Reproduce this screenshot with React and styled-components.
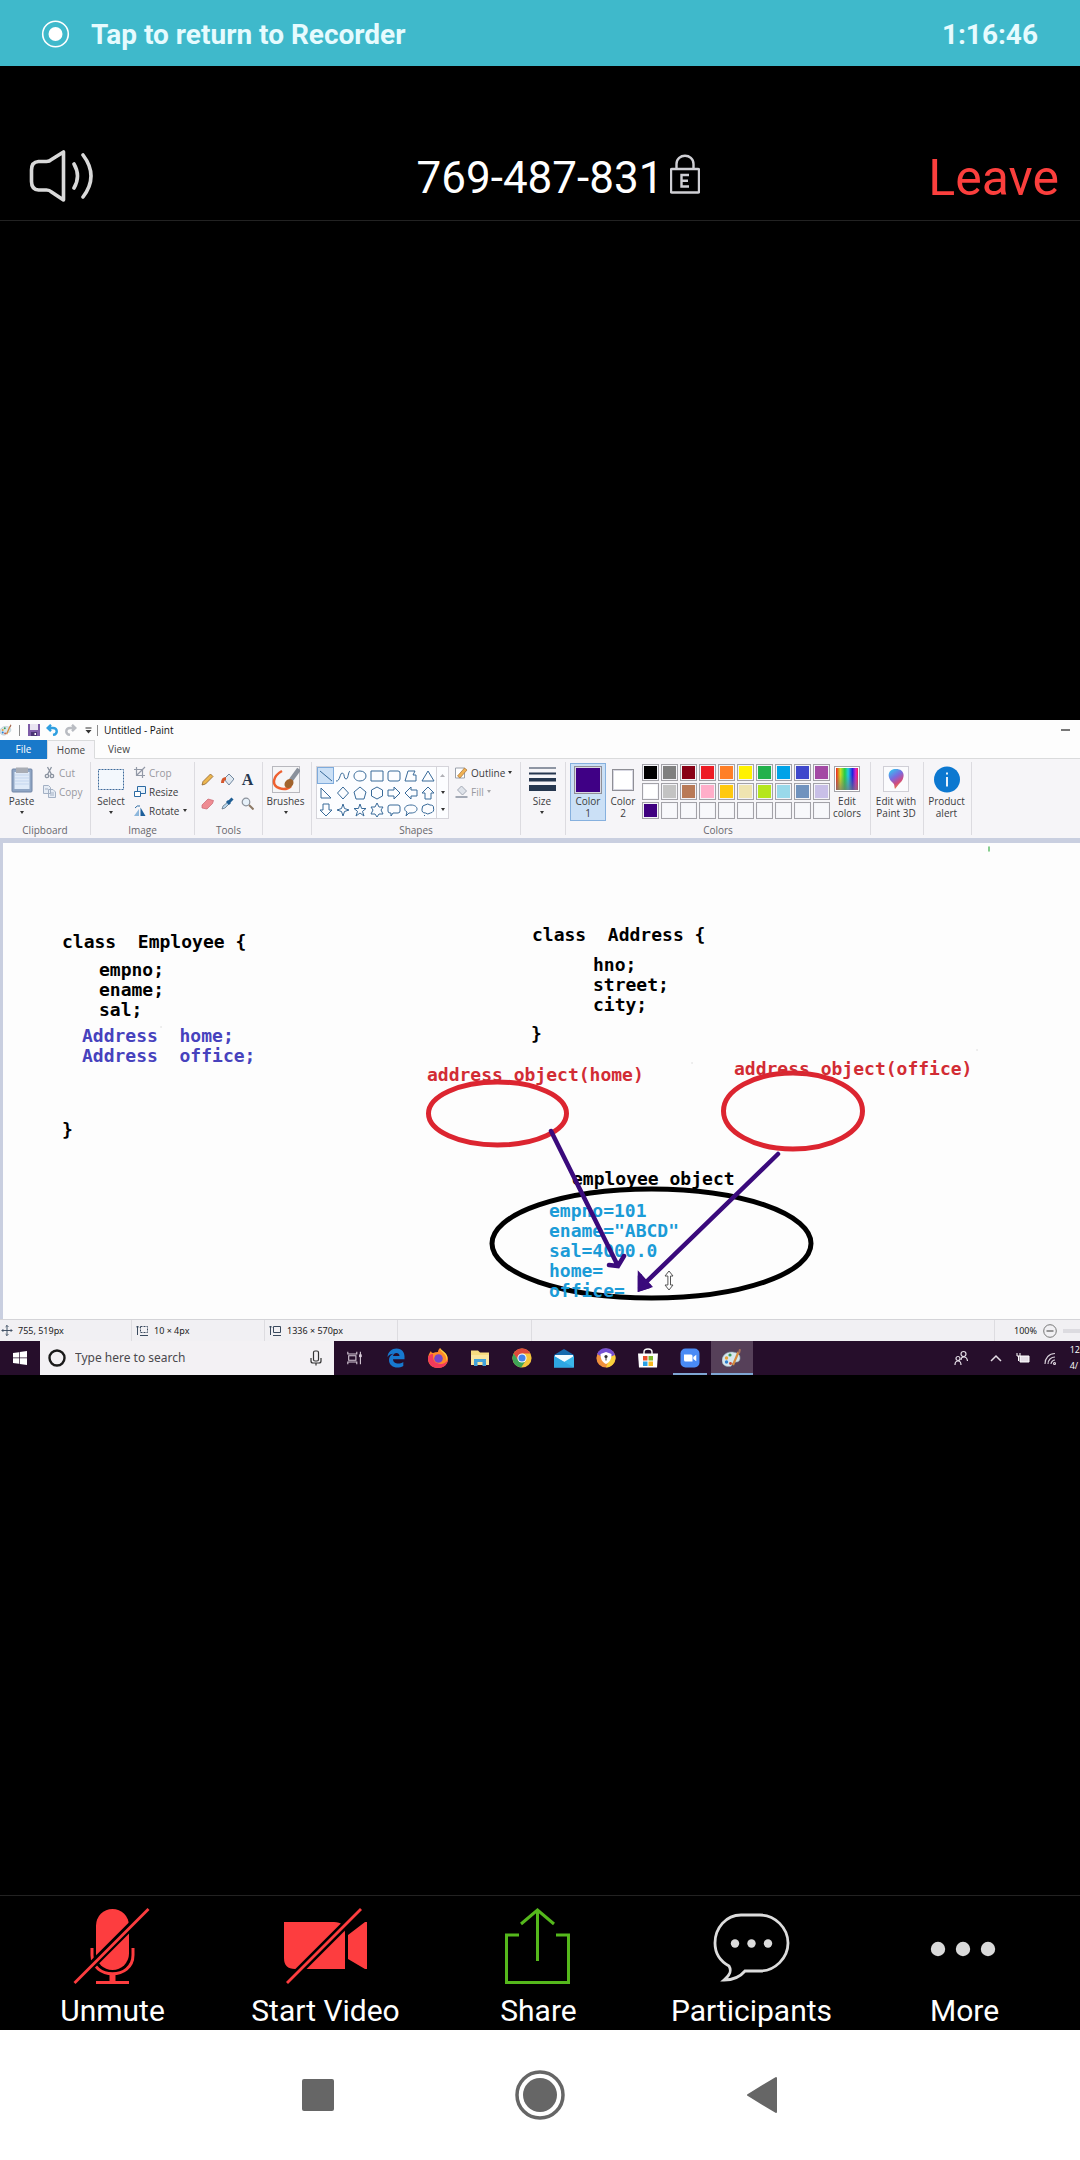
import React from "react";
import styled, { createGlobalStyle, css } from "styled-components";

const Global = createGlobalStyle`
  * { box-sizing: border-box; }
  body { margin: 0; background: #000; font-family: Roboto, sans-serif; }
  button { margin: 0; padding: 0; border: 0; background: none; font: inherit; color: inherit; }
  svg { display: block; flex: none; }
`;

/* ---------- phone frame ---------- */
const Screen = styled.div`
  min-height: 100vh;
  display: flex;
  flex-direction: column;
  background: #000;
  color: #fff;
`;
const RecorderBar = styled.button`
  && {
    height: 66px;
    padding: 4px 42px 0 40px;
    display: flex;
    align-items: center;
    gap: 20px;
    background: #3fb9cb;
    color: #e6fbfe;
    font-size: 28px;
    font-weight: 700;
    line-height: 32px;
  }
`;
const RecorderTime = styled.span`
  margin-left: auto;
`;
const MeetingHeader = styled.header`
  height: 155px;
  padding: 68px 21px 0;
  display: grid;
  grid-template-columns: 1fr auto 1fr;
  align-items: start;
  border-bottom: 1px solid #222;
`;
const HeaderIconButton = styled.button`
  justify-self: start;
  && { padding: 14px 0 0 6px; }
`;
const MeetingId = styled.h1`
  margin: 0;
  padding-top: 14px;
  font-size: 44px;
  font-weight: 400;
  line-height: 60px;
`;
const HeaderEnd = styled.div`
  display: flex;
  justify-content: space-between;
  align-items: flex-start;
`;
const LockHolder = styled.span`
  padding: 20px 0 0 7px;
`;
const LeaveButton = styled.button`
  && {
    padding-top: 14px;
    color: #fb3f3d;
    font-size: 50px;
    line-height: 60px;
  }
`;
const Stage = styled.main`
  flex: 1;
  display: flex;
  flex-direction: column;
  justify-content: center;
  padding-bottom: 21px;
`;
const Toolbar = styled.nav`
  display: grid;
  grid-template-columns: repeat(5, 1fr);
  padding: 11px 9px 1px 6px;
  border-top: 1px solid #222;
`;
const ToolButton = styled.button`
  display: flex;
  flex-direction: column;
  align-items: center;
  gap: 6px;
  && {
    font-size: 30px;
    line-height: 36px;
  }
`;
const SystemNav = styled.nav`
  height: 130px;
  display: grid;
  grid-template-columns: repeat(3, 222px);
  justify-content: center;
  background: #fff;
  button { display: grid; place-items: center; }
`;

/* ---------- shared desktop ---------- */
const Desktop = styled.section`
  overflow: hidden;
  background: #fdfdfd;
  color: #3c3c40;
  font: 10px/12px "Open Sans", sans-serif;
`;
const TitleBar = styled.div`
  height: 20px;
  display: flex;
  align-items: center;
  padding-right: 10px;
  color: #111;
`;
const TitleRule = styled.i`
  width: 1px;
  height: 11px;
  background: #8c8c8c;
  margin: 0 ${(p) => p.$right || 0}px 0 ${(p) => p.$left || 0}px;
`;
const QuickButton = styled.button`
  width: 18px;
  display: grid;
  place-items: center;
`;
const MinimizeButton = styled.button`
  && {
    margin-left: auto;
    width: 9px;
    height: 2px;
    background: #777;
  }
`;
const Tabs = styled.div`
  height: 19px;
  display: flex;
`;
const Tab = styled.button`
  && {
    width: 48px;
    color: #444;
    border-bottom: 1px solid #dadbdc;
    ${(p) => p.$kind === "file" && css`background: #1979ca; color: #fff; border-color: #1979ca; width: 47px;`}
    ${(p) => p.$kind === "active" && css`background: #f6f5f8; border: 1px solid #dadbdc; border-bottom-color: #f6f5f8;`}
  }
`;
const TabFill = styled.span`
  flex: 1;
  border-bottom: 1px solid #dadbdc;
`;
const Ribbon = styled.div`
  height: 79px;
  padding: 3px 0;
  display: flex;
  background: #f6f5f8;
`;
const Group = styled.div`
  flex: none;
  width: ${(p) => p.$w}px;
  display: flex;
  flex-direction: column;
  justify-content: space-between;
  border-right: 1px solid #dcdbe0;
`;
const GroupBody = styled.div`
  display: flex;
  align-items: flex-start;
  padding-left: ${(p) => p.$pad || 0}px;
`;
const GroupName = styled.span`
  line-height: 10px;
  text-align: center;
  color: #66666c;
`;
const BigButton = styled.button`
  && {
    width: ${(p) => p.$w}px;
    padding: ${(p) => (p.$selected ? "0" : "1px")} 0 1px;
    margin-top: 1px;
    display: flex;
    flex-direction: column;
    align-items: center;
    white-space: pre;
    ${(p) => p.$selected && css`background: #cbe0f6; border: 1px solid #86b0de;`}
  }
`;
const BigIcon = styled.span`
  height: 31px;
  display: grid;
  place-items: center;
`;
const Caret = styled.i`
  width: 0;
  height: 0;
  border: 2px solid transparent;
  border-top: 3px solid #333;
  border-bottom: 0;
  margin-top: ${(p) => (p.$below ? 4 : 0)}px;
  opacity: ${(p) => (p.$off ? 0.4 : 1)};
`;
const SmallStack = styled.div`
  display: flex;
  flex-direction: column;
  padding: 1px 0 0 ${(p) => p.$pad || 0}px;
`;
const SmallButton = styled.button`
  && {
    height: 19px;
    display: flex;
    align-items: center;
    gap: 3px;
    color: ${(p) => (p.$off ? "#98989e" : "#3c3c40")};
  }
`;
const ToolGrid = styled.div`
  display: grid;
  grid-template: repeat(2, 24px) / repeat(3, 20px);
  padding-top: 5px;
  button { display: grid; place-items: center; }
`;
const Gallery = styled.div`
  margin-top: 4px;
  display: flex;
  border: 1px solid #d5d4da;
  background: #fcfdff;
`;
const GalleryGrid = styled.div`
  display: grid;
  grid-template: repeat(3, 17px) / repeat(7, 17px);
`;
const ShapeButton = styled.button`
  display: grid;
  place-items: center;
  && {
    ${(p) => p.$selected && css`background: #cbe0f6; box-shadow: inset 0 0 0 1px #7fabdc;`}
  }
`;
const GalleryScroll = styled.div`
  width: 12px;
  display: grid;
  place-items: center;
  border-left: 1px solid #d5d4da;
`;
const Palette = styled.div`
  display: grid;
  grid-template-columns: repeat(10, 17px);
  grid-auto-rows: 17px;
  gap: 2px;
  padding: 2px 0 0 2px;
`;
const Swatch = styled.button`
  && {
    border: 1px solid #a3a2a8;
    background: ${(p) => p.$color || "#f8f8fb"};
    box-shadow: inset 0 0 0 1px #f4f4f8;
  }
`;
const InkPreview = styled.i`
  width: ${(p) => p.$size}px;
  height: ${(p) => p.$size}px;
  border: 1px solid #8f8f96;
  background: ${(p) => p.$color};
  box-shadow: inset 0 0 0 1px #d8d8e2;
`;
const Workspace = styled.div`
  padding: 5px 0 0 3px;
  background: #c9cfe0;
`;
const Canvas = styled.div`
  position: relative;
  height: 476px;
  background: #fdfdfd;
  overflow: hidden;
`;
const Drawing = styled.svg`
  position: absolute;
  left: 0;
  top: 0;
`;
const CanvasText = styled.pre`
  position: absolute;
  left: ${(p) => p.$x}px;
  top: ${(p) => p.$y}px;
  margin: 0;
  color: ${(p) => p.$color || "#000"};
  font: 700 18px/20px "DejaVu Sans Mono", monospace;
`;
const StatusBar = styled.div`
  height: 22px;
  display: flex;
  border-top: 1px solid #d4d4d8;
  background: #f1f0f3;
  color: #222;
  font: 9px/12px "Noto Sans", sans-serif;
`;
const StatusCell = styled.span`
  flex: none;
  width: ${(p) => p.$w}px;
  padding-left: ${(p) => p.$pad ?? 4}px;
  display: flex;
  align-items: center;
  gap: 5px;
  border-right: 1px solid #dddce0;
`;
const ZoomCell = styled.div`
  flex: none;
  margin-left: auto;
  width: 86px;
  padding-left: 19px;
  display: flex;
  align-items: center;
  gap: 6px;
  border-left: 1px solid #dddce0;
  overflow: hidden;
`;
const ZoomSlider = styled.input`
  flex: none;
  width: 80px;
  height: 4px;
  margin: 0;
  appearance: none;
  background: #dcdbe0;
  &::-webkit-slider-thumb { appearance: none; width: 5px; height: 10px; background: #888; }
`;
const Taskbar = styled.div`
  height: 34px;
  display: flex;
  background: #260e2b;
  color: #fff;
`;
const TaskButton = styled.button`
  && {
    flex: none;
    width: ${(p) => p.$w || 42}px;
    display: grid;
    place-items: center;
    ${(p) => p.$state && css`border-bottom: 2px solid #7fa6d3; padding-top: 2px;`}
    ${(p) => p.$state === "active" && css`background: #564059;`}
    ${(p) => p.$state === "open" && css`margin: 0 4px; width: 34px;`}
  }
`;
const SearchBox = styled.label`
  flex: none;
  width: 294px;
  padding: 0 12px 0 8px;
  display: flex;
  align-items: center;
  gap: 9px;
  background: #f3f1f4;
`;
const SearchInput = styled.input`
  flex: 1;
  min-width: 0;
  padding: 0;
  border: 0;
  background: none;
  color: #4a484c;
  font: 12px/16px "Noto Sans", sans-serif;
  &::placeholder { color: #4a484c; }
`;
const Tray = styled.div`
  margin-left: auto;
  display: flex;
  align-items: center;
  gap: 14px;
`;
const PeopleButton = styled.button`
  && { margin-right: 8px; }
`;
const Clock = styled.time`
  white-space: pre;
  font: 9px/16px "Open Sans", sans-serif;
`;

/* ---------- drawings ---------- */
const RED = "#fd3d3f";
const MicOff = () => (
  <svg width="86" height="80" viewBox="1 0 86 80">
    <rect x="27" y="2" width="33" height="61" rx="16.5" fill={RED} />
    <path d="M23 41v7c0 25 41 25 41 0v-7" fill="none" stroke={RED} strokeWidth="3" />
    <path d="M43.500 66v9" stroke={RED} strokeWidth="6" />
    <path d="M27 75.500h33" stroke={RED} strokeWidth="3" />
    <path d="M4 77L80 1" stroke="#000" strokeWidth="8" />
    <path d="M5.500 76L79.500 2" stroke={RED} strokeWidth="2.800" />
  </svg>
);
const VideoOff = () => (
  <svg width="86" height="80" viewBox="1 0 86 80">
    <path d="M2 15h50q11 0 11 11v36H13Q2 62 2 51zM66 28l17-13h2v47h-2L66 52z" fill={RED} />
    <path d="M4 77L80 1" stroke="#000" strokeWidth="8" />
    <path d="M5 76L79 2" stroke={RED} strokeWidth="2.800" />
  </svg>
);
const Share = () => (
  <svg width="86" height="80" viewBox="1 0 86 80" fill="none" stroke="#55b81c" strokeWidth="3">
    <path d="M24 28H11.500v47.500h62V28H61M42.500 3v51M26 17L42.500 3 59 17" />
  </svg>
);
const Bubble = () => (
  <svg width="86" height="80" viewBox="-1 0 86 80">
    <path d="M31 8h19c15 0 28 13 28 28S65 64 50 64H35c-5 6-12 9-21 9 6-5 8-9 5-14C10 54 5 46 5 36 5 21 16 8 31 8z" fill="none" stroke="#dcdcdc" strokeWidth="2.800" />
    {[25, 41.5, 58].map((x) => <circle key={x} cx={x} cy="36.500" r="4.200" fill="#dcdcdc" />)}
  </svg>
);
const MoreDots = () => (
  <svg width="86" height="80" viewBox="1 0 86 80" fill="#d9d9d9">
    {[17, 42, 67].map((x) => <circle key={x} cx={x} cy="42" r="7.200" />)}
  </svg>
);
const Speaker = () => (
  <svg width="70" height="56" viewBox="0 0 70 56" fill="none" stroke="#d9d9d9" strokeWidth="3.600" strokeLinecap="round" strokeLinejoin="round">
    <path d="M4.500 22q0-8 7-8.500h8q3 0 5-2L36.500 4v48L24.500 44q-2-2-5-2h-8q-7-.5-7-8.500zM47 16q7 12 0 24M56 7q16 21 0 42" />
  </svg>
);
const Lock = () => (
  <svg width="30" height="40" viewBox="0 0 30 40" fill="none" stroke="#cfcfd4" strokeWidth="2.400">
    <rect x="1" y="15" width="28" height="23.500" rx="1" />
    <path d="M6.500 15v-5c0-11 17-11 17 0v5" />
    <path d="M19 21h-7.500v11.500H19M11.500 26.700H18" strokeWidth="2.400" />
  </svg>
);
const RecordDot = () => (
  <svg width="31" height="30" viewBox="0 0 31 30">
    <circle cx="15.500" cy="14" r="12.800" fill="none" stroke="#fff" strokeWidth="1.600" />
    <circle cx="15.500" cy="14" r="7" fill="#fff" />
  </svg>
);

const PaletteIcon = ({ size = 12 }) => (
  <svg width={size} height={size} viewBox="0 0 20 20">
    <path d="M9 4C4 4 0 8 0 12.500S4 19 8 18.500c3-.4 1-3 3.500-4 2-.8 6 .5 6.500-4S14 4 9 4z" fill="#d6e7ee" stroke="#8aa3ae" strokeWidth=".6" />
    <circle cx="4.500" cy="10" r="1.700" fill="#e8a13a" /><circle cx="8" cy="7" r="1.600" fill="#3b9a58" />
    <circle cx="4.500" cy="14" r="1.700" fill="#2f80d0" /><circle cx="8.500" cy="15.500" r="1.400" fill="#c74636" />
    <path d="M11 17L16.500 4" stroke="#d68a3c" strokeWidth="2.200" /><path d="M16 5l1-4 2 .5-1 4z" fill="#a8705a" />
  </svg>
);
const Save = () => (
  <svg width="12" height="12" viewBox="0 0 12 12"><path d="M0 0h12v12H0z" fill="#7e5ca8" /><path d="M2 0h8v6H2z" fill="#e9e4f1" /><path d="M3 8h6v4H3z" fill="#4c3474" /><path d="M6.500 9H8v2H6.500z" fill="#fff" /></svg>
);
const Undo = ({ redo }) => (
  <svg width="13" height="12" viewBox="0 0 13 12" fill="none" stroke={redo ? "#b9bcc2" : "#2f9fe0"} strokeWidth="2.400">
    <g transform={redo ? "matrix(-1 0 0 1 13 0)" : undefined}><path d="M5 .8L1.700 4 5 7.200M2 4h5c5 0 5 6 0 7" /></g>
  </svg>
);
const Paste = () => (
  <svg width="22" height="27" viewBox="0 0 22 27"><rect x="1" y="3" width="20" height="23" rx="1" fill="#8fa5c4" stroke="#7286a6" /><path d="M3.500 6h15v17h-15z" fill="#dfeaf8" /><path d="M5 1.500h12V7H5z" fill="#a9adb5" /><path d="M4 9h14M4 12h14M4 15h14M4 18h14" stroke="#c3d5ee" /></svg>
);
const Select = () => (
  <svg width="26" height="27" viewBox="0 0 26 27"><rect x=".5" y="3.500" width="25" height="20" fill="#f3f8fd" stroke="#3d6a9a" strokeDasharray="2 1" /></svg>
);
const Brush = () => (
  <svg width="28" height="27" viewBox="0 0 28 27"><rect x=".5" y=".5" width="27" height="26" fill="#f5f5f7" stroke="#b8b8be" /><path d="M10 5C1 10-1 19 7 22c5 2 9 1 12-2" fill="none" stroke="#ee6030" strokeWidth="2.500" /><path d="M27 3L19 14" stroke="#8a919c" strokeWidth="4.500" /><ellipse cx="17" cy="17.500" rx="5" ry="4" fill="#a0632d" transform="rotate(-45 17 17.500)" /></svg>
);
const SizeLines = () => (
  <svg width="27" height="27" viewBox="0 0 27 27" fill="#26374f"><path d="M0 1.500h27v1H0zM0 6.500h27v2H0zM0 12h27v3.500H0zM0 19h27v6H0z" /></svg>
);
const Rainbow = () => (
  <svg width="26" height="27" viewBox="0 0 26 27"><defs><linearGradient id="hue"><stop offset="0" stopColor="#e22" /><stop offset=".2" stopColor="#cd2" /><stop offset=".4" stopColor="#2c4" /><stop offset=".55" stopColor="#2cd" /><stop offset=".75" stopColor="#22d" /><stop offset=".9" stopColor="#d2c" /><stop offset="1" stopColor="#e24" /></linearGradient><linearGradient id="fade" x2="0" y2="1"><stop offset=".3" stopColor="#777" stopOpacity="0" /><stop offset="1" stopColor="#777" stopOpacity=".7" /></linearGradient></defs><rect x=".5" y=".5" width="25" height="25" fill="#fff" stroke="#a3a2a8" /><path d="M2 2h22v22H2z" fill="url(#hue)" /><path d="M2 2h22v22H2z" fill="url(#fade)" /></svg>
);
const Paint3D = () => (
  <svg width="26" height="27" viewBox="0 0 26 27"><defs><linearGradient id="drop" x1=".2" x2=".7" y2="1"><stop offset="0" stopColor="#35c3ee" /><stop offset=".4" stopColor="#7a6ae0" /><stop offset=".7" stopColor="#d04a80" /><stop offset="1" stopColor="#f0a030" /></linearGradient></defs><rect x=".5" y=".5" width="25" height="25" fill="#fbfbfd" stroke="#d0cfd6" /><path d="M13 3c9 0 10 9 3 15l-4 5c-1-3 0-4-2-6C3 11 5 3 13 3z" fill="url(#drop)" /></svg>
);
const Info = () => (
  <svg width="26" height="27" viewBox="0 0 26 27"><circle cx="13" cy="13.500" r="13" fill="#0c78d0" /><path d="M13 11v9.500M13 6.500v2" stroke="#fff" strokeWidth="1.800" /></svg>
);
const Glyph = ({ w = 13, children }) => (
  <svg width={w} height="13" viewBox="0 0 13 13" fill="none">{children}</svg>
);
const Cut = () => <Glyph><g stroke="#8b93a0" strokeWidth="1.300"><path d="M4.500 1l4 7.500M8.500 1l-4 7.500" /><circle cx="4" cy="10" r="1.700" /><circle cx="9" cy="10" r="1.700" /></g></Glyph>;
const Copy = () => <Glyph><g fill="#e6ecf5" stroke="#a3b0c4"><path d="M.5.5h5l2 2v6h-7zM5.500 4.500h4.500l2.500 2.500v5.500h-7z" /><path d="M7 8h4M7 10h4M2 4h3" /></g></Glyph>;
const Crop = () => <Glyph><path d="M3.500 1v8.500H12M1 3.500h8.500V12M3.500 9.500L12 1" stroke="#9298a6" strokeWidth="1.200" /></Glyph>;
const Resize = () => <Glyph><path d="M4.500 1.500h8v7h-8z" fill="#e8f2fb" stroke="#2c6aa3" /><path d="M1.500 6.500h6v5h-6z" fill="#fff" stroke="#2c6aa3" /></Glyph>;
const Rotate = () => <Glyph><path d="M1 12l5-7v7z" fill="#8db7dc" /><path d="M7.500 12V3.500l5 8.500z" fill="#1d5f9b" /><path d="M2 4q2-3 5-2" stroke="#2c6aa3" /></Glyph>;
const Outline = () => <Glyph w={14}><path d="M1 2h9v10H1z" fill="#fff" stroke="#9aa0ab" /><path d="M3 10l7-8 2.500 2-7 8z" fill="#f0b254" stroke="#a67033" strokeWidth=".7" /></Glyph>;
const Fill = () => <Glyph w={14}><path d="M3 5l4-4 5 5-4 4z" fill="#dfe3ea" stroke="#a3a9b5" /><path d="M1 11h12v2H1z" fill="#a3a9b5" /></Glyph>;

const toolIcons = [
  ["Pencil", <path key="p" d="M1 12l1-3.500L9.500 1 12 3.500 4.500 11z" fill="#edb64e" stroke="#8d6330" strokeWidth=".8" />],
  ["Fill", <g key="f"><path d="M3 6l5-5 5 5-5 6z" fill="#dfe8f1" stroke="#71879e" /><path d="M0 10q0-6 5-6v3Q3 7 3 10z" fill="#d4572d" /></g>],
  ["Text", null],
  ["Eraser", <path key="e" d="M1 8l6-6 5.500 1.500-1 3L6 12l-5-1z" fill="#ee8b92" stroke="#c86670" strokeWidth=".7" />],
  ["Color picker", <g key="c"><path d="M1 12l1-3 5-4 1.500 1.500L4 11z" fill="#b9d7ee" stroke="#567" strokeWidth=".7" /><path d="M6 4l3 3M7.500 5.500l4-4" stroke="#1f5e94" strokeWidth="3" /></g>],
  ["Magnifier", <g key="m"><circle cx="5" cy="5" r="3.800" fill="#e7f1fa" stroke="#8b919b" strokeWidth="1.200" /><path d="M8 8l4.500 4.500" stroke="#8d7966" strokeWidth="2" /></g>],
];
const shapes = [
  ["Line", "M1 2l12 10"], ["Curve", "M0 12C4 13 4 3 6.500 4s1 6 3.500 6 2-7 4-8"], ["Oval", "M7 2c8 0 8 10 0 10S-1 2 7 2z"], ["Rectangle", "M1 2h12v10H1z"],
  ["Rounded rectangle", "M3 2h8q2 0 2 2v6q0 2-2 2H3q-2 0-2-2V4q0-2 2-2z"], ["Polygon", "M1 12L4 2h7L9 6h3v6z"], ["Triangle", "M7 2l6 10H1z"],
  ["Right triangle", "M2 2l10 10H2z"], ["Diamond", "M7 1l5.500 6L7 13 1.500 7z"], ["Pentagon", "M7 1l6 5-2 7H3L1 6z"], ["Hexagon", "M7 1l5.500 3v6L7 13l-5.500-3V4z"],
  ["Right arrow", "M1 4h6V1l6 6-6 6v-3H1z"], ["Left arrow", "M13 4H7V1L1 7l6 6v-3h6z"], ["Up arrow", "M4 13V7H1l6-6 6 6h-3v6z"],
  ["Down arrow", "M4 1v6H1l6 6 6-6h-3V1z"], ["Four-point star", "M7 1l1.500 4.500L13 7 8.500 8.500 7 13 5.500 8.500 1 7l4.500-1.500z"],
  ["Five-point star", "M7 1l1.600 4.500H13L9.500 8.400 11 13 7 10l-4 3 1.500-4.600L1 5.500h4.400z"], ["Six-point star", "M7 0l2 4h4l-2 3 2 4H9l-2 3-2-3H1l2-4-2-3h4z"],
  ["Rounded callout", "M3 2h8q2 0 2 2v4q0 2-2 2H6l-2 3v-3H3q-2 0-2-2V4q0-2 2-2z"], ["Oval callout", "M7 2c8 0 8 8 0 8H5l-3 3 1-4C-1 7 0 2 7 2z"],
  ["Cloud callout", "M4 2q3-2 5 0 4 0 3.500 3 1 4-3 5-3 2-5 0-4 0-3.500-4Q1 2 4 2zM3 12.500h1"],
];
const palette = [
  "#000", "#7f7f7f", "#880015", "#ed1c24", "#ff7f27", "#fff200", "#22b14c", "#00a2e8", "#3f48cc", "#a349a4",
  "#fff", "#c3c3c3", "#b97a57", "#ffaec9", "#ffc90e", "#efe4b0", "#b5e61d", "#99d9ea", "#7092be", "#c8bfe7",
  "#3f0080", null, null, null, null, null, null, null, null, null,
];

const AppIcon = ({ children, size = 20 }) => <svg width={size} height={size} viewBox="0 0 20 20">{children}</svg>;
const apps = [
  ["Task view", <g key="a" fill="none" stroke="#d8ccd9" strokeWidth="1.200"><path d="M2 3v2.500h10V3M2 17v-2.500h10V17M3 7.500h8v5H3zM16 3v14" /><path d="M16 6v3" strokeWidth="3" /></g>],
  ["Edge", <path key="a" d="M1.500 9C2 3.500 6 .5 10.500 .5c5.500 0 8 4 8 8v2.700H7c.3 5 6.500 5.300 10.300 2.800v4C11 21.500 3 19 3 12c0-3 1.600-5 4.500-6.300C5 5.800 3 6.800 1.500 9zM7 8h6.500c0-4-5.800-4.300-6.500 0z" fill="#1779cf" />],
  ["Firefox", <g key="a"><path d="M12 0c1 3 8 5 8 11 0 5-4 9-10 9S0 16 0 11c0-3 1-6 3-8 0 1 1 2 2 2 2-1 5-1 5-1 0-2 1-3 2-4z" fill="#ff8a2a" /><path d="M0 10c0 6 4 10 10 10 5 0 9-3 10-8-3 4-7 5-11 3C5 14 5 9 5 6 2 6 0 8 0 10z" fill="#f23a5b" /><circle cx="10.500" cy="10.500" r="4.300" fill="#7646c8" /><path d="M12 0c0 5 8 5 6 13 4-7-3-9-6-13z" fill="#ffd43b" /></g>],
  ["File Explorer", <g key="a"><path d="M1 2.500h7l2 2h9v12H1z" fill="#f7dc80" /><path d="M1 7h18v10H1z" fill="#fbe79f" /><path d="M4 18v-7h12v7h-3.500v-4h-5v4z" fill="#43a3da" /></g>],
  ["Chrome", <g key="a"><circle cx="10" cy="10" r="9.600" fill="#f5c53b" /><path d="M10 .4a9.600 9.600 0 0 1 8.500 5.200H10L5.500 12 1.600 5.500A9.600 9.600 0 0 1 10 .4z" fill="#df4a3c" /><path d="M1.600 5.500a9.600 9.600 0 0 0 7.500 14.100L13.500 13l-7-.5z" fill="#3fa557" /><circle cx="10" cy="10" r="4.600" fill="#fff" /><circle cx="10" cy="10" r="3.600" fill="#4383ea" /></g>],
  ["Mail", <g key="a"><path d="M0 7l10-6 10 6v12H0z" fill="#1669ad" /><path d="M1 7h18v4l-9 4-9-4z" fill="#f4fbff" /><path d="M0 8l10 6 10-6v11.500H0z" fill="#3bb6ea" /><path d="M0 19.500h20L0 8z" fill="#2ea6e2" /></g>],
  ["Secure Browser", <g key="a"><circle cx="10" cy="10" r="9.600" fill="#f0913c" /><path d="M1 6a9.600 9.600 0 0 1 18 1L10 11z" fill="#7550d2" /><path d="M19 7c2 5-2 12-9 12.600L14 9z" fill="#f8d13c" /><path d="M10 4l5.500 2c0 5-1.500 8-5.500 10-4-2-5.500-5-5.500-10z" fill="#fff" /><circle cx="10" cy="8.500" r="1.600" fill="#333" /><path d="M10 9v3.500" stroke="#333" /></g>],
  ["Store", <g key="a"><path d="M6 6V4c0-4 8-4 8 0v2" fill="none" stroke="#fff" strokeWidth="1.400" /><path d="M0 5.500h20L19 19.500H1z" fill="#fff" /><path d="M5 8h4.500v4.500H5z" fill="#e8502d" /><path d="M10.500 8H15v4.500h-4.500z" fill="#7fb92c" /><path d="M5 13.500h4.500V18H5z" fill="#2ba0e4" /><path d="M10.500 13.500H15V18h-4.500z" fill="#f7b91f" /></g>],
  ["Zoom", <g key="a"><rect x=".5" y=".5" width="19" height="19" rx="5" fill="#4a8bf5" /><path d="M4 6.500h7q1.500 0 1.500 1.500v5.500h-7Q4 13.500 4 12zM13.300 9l3-2.200v6.400l-3-2.200z" fill="#fff" /></g>, "open"],
];

const fields = [
  { x: 59, y: 89, t: "class  Employee {" },
  { x: 96, y: 117, t: "empno;\nename;\nsal;" },
  { x: 79, y: 183, t: "Address  home;\nAddress  office;", c: "#4742bd" },
  { x: 59, y: 277, t: "}" },
  { x: 529, y: 82, t: "class  Address {" },
  { x: 590, y: 112, t: "hno;\nstreet;\ncity;" },
  { x: 528, y: 181, t: "}" },
  { x: 424, y: 222, t: "address object(home)", c: "#d22c34" },
  { x: 731, y: 216, t: "address object(office)", c: "#d22c34" },
  { x: 569, y: 326, t: "employee object" },
  { x: 546, y: 358, t: 'empno=101\nename="ABCD"\nsal=4000.0\nhome=\noffice=', c: "#1b9bd7" },
];

export default function App() {
  return (
    <Screen>
      <Global />
      <RecorderBar>
        <RecordDot />
        <span>Tap to return to Recorder</span>
        <RecorderTime>1:16:46</RecorderTime>
      </RecorderBar>
      <MeetingHeader>
        <HeaderIconButton aria-label="Speaker"><Speaker /></HeaderIconButton>
        <MeetingId>769-487-831</MeetingId>
        <HeaderEnd>
          <LockHolder><Lock /></LockHolder>
          <LeaveButton>Leave</LeaveButton>
        </HeaderEnd>
      </MeetingHeader>

      <Stage>
        <Desktop>
          <TitleBar>
            <PaletteIcon />
            <TitleRule $left={7} $right={5} />
            <QuickButton aria-label="Save"><Save /></QuickButton>
            <QuickButton aria-label="Undo"><Undo /></QuickButton>
            <QuickButton aria-label="Redo"><Undo redo /></QuickButton>
            <QuickButton aria-label="Customize"><svg width="7" height="7" viewBox="0 0 7 7"><path d="M.5.500h6v1h-6zM.5 3h6l-3 3.500z" fill="#333" /></svg></QuickButton>
            <TitleRule $right={6} />
            <span>Untitled - Paint</span>
            <MinimizeButton aria-label="Minimize" />
          </TitleBar>
          <Tabs>
            <Tab $kind="file">File</Tab>
            <Tab $kind="active">Home</Tab>
            <Tab>View</Tab>
            <TabFill />
          </Tabs>
          <Ribbon>
            <Group $w={91}>
              <GroupBody>
                <BigButton $w={43}><BigIcon><Paste /></BigIcon>Paste<Caret $below /></BigButton>
                <SmallStack>
                  <SmallButton $off><Cut />Cut</SmallButton>
                  <SmallButton $off><Copy />Copy</SmallButton>
                </SmallStack>
              </GroupBody>
              <GroupName>Clipboard</GroupName>
            </Group>
            <Group $w={104}>
              <GroupBody>
                <BigButton $w={40}><BigIcon><Select /></BigIcon>Select<Caret $below /></BigButton>
                <SmallStack $pad={2}>
                  <SmallButton $off><Crop />Crop</SmallButton>
                  <SmallButton><Resize />Resize</SmallButton>
                  <SmallButton><Rotate />Rotate<Caret /></SmallButton>
                </SmallStack>
              </GroupBody>
              <GroupName>Image</GroupName>
            </Group>
            <Group $w={68}>
              <GroupBody $pad={2}>
                <ToolGrid>
                  {toolIcons.map(([name, art]) => (
                    <button key={name} aria-label={name}>
                      {art ? <Glyph>{art}</Glyph> : <svg width="15" height="15" viewBox="0 0 15 15"><text x="7.500" y="13" textAnchor="middle" fontFamily="Liberation Serif, serif" fontWeight="700" fontSize="16" fill="#26374f">A</text></svg>}
                    </button>
                  ))}
                </ToolGrid>
              </GroupBody>
              <GroupName>Tools</GroupName>
            </Group>
            <Group $w={49}>
              <GroupBody>
                <BigButton $w={45}><BigIcon><Brush /></BigIcon>Brushes<Caret $below /></BigButton>
              </GroupBody>
            </Group>
            <Group $w={209}>
              <GroupBody $pad={4}>
                <Gallery>
                  <GalleryGrid>
                    {shapes.map(([name, d], i) => (
                      <ShapeButton key={name} aria-label={name} $selected={i === 0}>
                        <svg width="14" height="14" viewBox="0 0 14 14"><path d={d} fill="none" stroke="#386a99" /></svg>
                      </ShapeButton>
                    ))}
                  </GalleryGrid>
                  <GalleryScroll>
                    <svg width="5" height="3" viewBox="0 0 5 3"><path d="M0 3h5L2.500 0z" fill="#b0b0b6" /></svg>
                    <Caret />
                    <Caret />
                  </GalleryScroll>
                </Gallery>
                <SmallStack $pad={5}>
                  <SmallButton><Outline />Outline<Caret /></SmallButton>
                  <SmallButton $off><Fill />Fill<Caret $off /></SmallButton>
                </SmallStack>
              </GroupBody>
              <GroupName>Shapes</GroupName>
            </Group>
            <Group $w={45}>
              <GroupBody>
                <BigButton $w={42}><BigIcon><SizeLines /></BigIcon>Size<Caret $below /></BigButton>
              </GroupBody>
            </Group>
            <Group $w={305}>
              <GroupBody $pad={4}>
                <BigButton $w={36} $selected><BigIcon><InkPreview $size={28} $color="#3f0085" /></BigIcon>{"Color\n1"}</BigButton>
                <BigButton $w={34}><BigIcon><InkPreview $size={22} $color="#fff" /></BigIcon>{"Color\n2"}</BigButton>
                <Palette>
                  {palette.map((c, i) => <Swatch key={i} $color={c} aria-label={c || "Custom color"} />)}
                </Palette>
                <BigButton $w={34}><BigIcon><Rainbow /></BigIcon>{"Edit\ncolors"}</BigButton>
              </GroupBody>
              <GroupName>Colors</GroupName>
            </Group>
            <Group $w={53}>
              <GroupBody>
                <BigButton $w={50}><BigIcon><Paint3D /></BigIcon>{"Edit with\nPaint 3D"}</BigButton>
              </GroupBody>
            </Group>
            <Group $w={48}>
              <GroupBody>
                <BigButton $w={45}><BigIcon><Info /></BigIcon>{"Product\nalert"}</BigButton>
              </GroupBody>
            </Group>
          </Ribbon>
          <Workspace>
            <Canvas>
              <Drawing width="1077" height="476" viewBox="3 843 1077 476" fill="none" strokeWidth="5">
                <ellipse cx="497.500" cy="1113.500" rx="69" ry="31.500" stroke="#dc2530" />
                <ellipse cx="793" cy="1111" rx="69.500" ry="38" stroke="#dc2530" />
                <ellipse cx="651.500" cy="1243.500" rx="159.500" ry="54.500" stroke="#000" />
              </Drawing>
              {fields.map((f, i) => <CanvasText key={i} $x={f.x} $y={f.y} $color={f.c}>{f.t}</CanvasText>)}
              <Drawing width="1077" height="476" viewBox="3 843 1077 476" fill="none" stroke="#3a0a7c" strokeWidth="4.500" strokeLinecap="round">
                <path d="M551 1131L618 1266M609 1265l9 1 6-10M778 1154L640 1288M640 1276v13l9-3" />
                <path d="M640 1276l9 10-9 3z" fill="#3a0a7c" />
                <path d="M667.500 1276h-2.500l4-5 4 5h-2.500v9h2.500l-4 5-4-5h2.500z" fill="#fff" stroke="#555" strokeWidth="1" />
                <path d="M989 847v4" stroke="#5fbf6a" strokeWidth="1.500" />
                <path d="M692 1063h.1M977 1050h.1M161 1027h.1" stroke="#bbb" strokeWidth="1" />
              </Drawing>
            </Canvas>
          </Workspace>
          <StatusBar>
            <StatusCell $w={132} $pad={1}>
              <Glyph w={12}><path d="M6.500 1v11M1 6.500h11M5 2.500L6.500 1 8 2.500M5 10.500L6.500 12 8 10.500M2.500 5L1 6.500 2.500 8M10.500 5L12 6.500 10.500 8" stroke="#3a4a5e" /></Glyph>
              755, 519px
            </StatusCell>
            <StatusCell $w={133}>
              <Glyph><path d="M1.500 11V2M0 3.500L1.500 2 3 3.500M4 11.500h8" stroke="#3a4a5e" /><path d="M4.500 2.500h7v6h-7z" stroke="#3a4a5e" strokeDasharray="2 1" /></Glyph>
              10 × 4px
            </StatusCell>
            <StatusCell $w={133}>
              <Glyph><path d="M1.500 11V2M0 3.500L1.500 2 3 3.500M4 11.500h8M4.500 2.500h7v6h-7z" stroke="#3a4a5e" /></Glyph>
              1336 × 570px
            </StatusCell>
            <StatusCell $w={134} />
            <ZoomCell>
              100%
              <svg width="14" height="14" viewBox="0 0 14 14" fill="none" stroke="#777"><circle cx="7" cy="7" r="6.300" /><path d="M3.500 7h7" strokeWidth="1.500" /></svg>
              <ZoomSlider type="range" aria-label="Zoom" defaultValue="50" />
            </ZoomCell>
          </StatusBar>
          <Taskbar>
            <TaskButton $w={40} aria-label="Start"><svg width="14" height="14" viewBox="0 0 14 14"><path d="M0 2l6-.8v5.400H0zM6.700 1.100L14 0v6.600H6.700zM0 7.300h6v5.500L0 12zM6.700 7.300H14V14l-7.300-1z" fill="#fff" /></svg></TaskButton>
            <SearchBox>
              <svg width="18" height="18" viewBox="0 0 18 18"><circle cx="9" cy="9" r="7.500" fill="none" stroke="#1a1a1a" strokeWidth="2.400" /></svg>
              <SearchInput aria-label="Search" placeholder="Type here to search" />
              <svg width="12" height="16" viewBox="0 0 12 16" fill="none" stroke="#333" strokeWidth="1.200"><rect x="3.500" y="1" width="5" height="10" rx="1.500" /><path d="M1 8v3q0 2 2 2h6q2 0 2-2V8M6 13v2.500" /></svg>
            </SearchBox>
            {apps.map(([name, art, state], i) => (
              <TaskButton key={name} aria-label={name} $state={state} $w={i ? 42 : 41}>
                <AppIcon size={i ? 20 : 18}>{art}</AppIcon>
              </TaskButton>
            ))}
            <TaskButton aria-label="Paint" $state="active"><PaletteIcon size={20} /></TaskButton>
            <Tray>
              <PeopleButton aria-label="People"><svg width="14" height="16" viewBox="0 0 14 16" fill="none" stroke="#e4dde6" strokeWidth="1.200"><circle cx="9.500" cy="4" r="2.500" /><path d="M7 10q0-3 3-3t3.500 4" /><circle cx="4" cy="8.500" r="2" /><path d="M1 15q0-4 3-4t3 4" /></svg></PeopleButton>
              <svg width="12" height="8" viewBox="0 0 12 8" fill="none" stroke="#e4dde6" strokeWidth="1.500"><path d="M1 7l5-5 5 5" /></svg>
              <svg width="14" height="12" viewBox="0 0 14 12"><path d="M4 4h9v6H4z" fill="#e4dde6" stroke="#fff" /><path d="M1 1v3h3V1M2.500 4v5" fill="none" stroke="#fff" /></svg>
              <svg width="12" height="13" viewBox="0 0 12 13" fill="none" stroke="#d8d0da" strokeWidth="1.100"><path d="M1 12C1 6 5 1.500 11 1.500M4 12c0-4 3-7 7-7M7 12c0-2 2-4 4-4" /><circle cx="10.500" cy="11.500" r="1" /></svg>
              <Clock>{"12\n4/"}</Clock>
            </Tray>
          </Taskbar>
        </Desktop>
      </Stage>

      <Toolbar>
        <ToolButton><MicOff />Unmute</ToolButton>
        <ToolButton><VideoOff />Start Video</ToolButton>
        <ToolButton><Share />Share</ToolButton>
        <ToolButton><Bubble />Participants</ToolButton>
        <ToolButton><MoreDots />More</ToolButton>
      </Toolbar>
      <SystemNav>
        <button aria-label="Recent apps"><svg width="32" height="32" viewBox="0 0 32 32"><rect width="32" height="32" rx="2" fill="#666" /></svg></button>
        <button aria-label="Home"><svg width="50" height="50" viewBox="0 0 50 50"><circle cx="25" cy="25" r="23" fill="none" stroke="#666" strokeWidth="3.500" /><circle cx="25" cy="25" r="17" fill="#666" /></svg></button>
        <button aria-label="Back"><svg width="32" height="38" viewBox="0 0 32 38"><path d="M30 2v34L2 19z" fill="#666" stroke="#666" strokeWidth="2" strokeLinejoin="round" /></svg></button>
      </SystemNav>
    </Screen>
  );
}
